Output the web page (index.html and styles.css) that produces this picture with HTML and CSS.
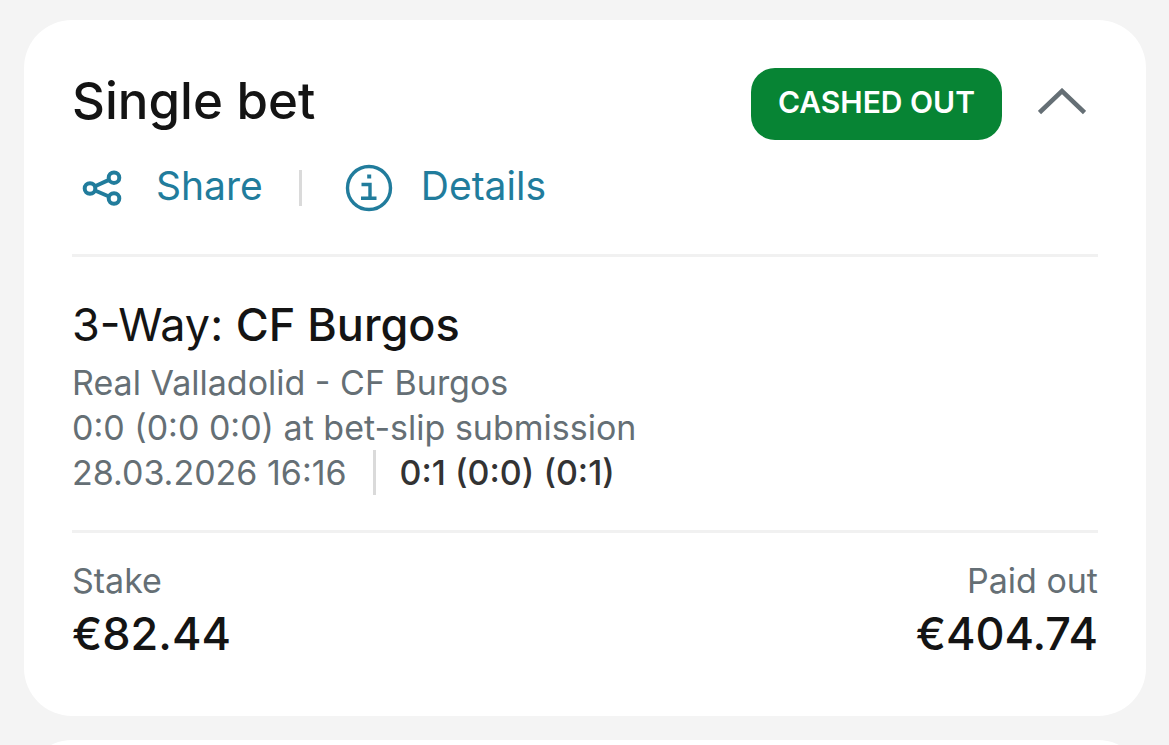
FILE: index.html
```html
<!DOCTYPE html>
<html lang="en">
<head>
	<meta charset="UTF-8">
	<meta name="viewport" content="width=device-width">
	<title>My bets</title>
	<link rel="stylesheet" href="styles.css">
</head>
<body>
<main class="bets">
	<article class="bet">
		<header class="bet-head">
			<h1 class="bet-title">Single bet</h1>
			<span class="badge">CASHED OUT</span>
			<button type="button" class="toggle" aria-label="Collapse" aria-expanded="true">
				<svg width="48" height="28" viewBox="0 0 48 28" fill="none" stroke="currentColor" stroke-width="4.500"><path d="M1.500 24.500 24 3l22.500 21.500"/></svg>
			</button>
		</header>
		<div class="actions">
			<button type="button" class="action">
				<svg width="56" height="48" viewBox="0 0 56 48" fill="none" stroke="currentColor" stroke-width="4">
					<circle cx="18" cy="24.500" r="5.300"/>
					<circle cx="42" cy="13.700" r="5.300"/>
					<circle cx="42" cy="34.500" r="5.300"/>
					<path d="M23 22.300 37 15.900M23 26.500l14 6"/>
				</svg>
				<span class="action-text">Share</span>
			</button>
			<span class="sep"></span>
			<button type="button" class="action">
				<svg width="48" height="48" viewBox="0 0 48 48" fill="none" stroke="currentColor" stroke-width="3.400">
					<circle cx="24" cy="24" r="21.500"/>
					<path d="M16.500 20.500h8.500V34M16 34.300h15.500"/>
					<path d="M22.200 12.500h4" stroke-width="4"/>
				</svg>
				<span class="action-text">Details</span>
			</button>
		</div>
		<section class="pick">
			<h2 class="pick-title">3-Way: <b>CF Burgos</b></h2>
			<p>Real Valladolid - CF Burgos</p>
			<p>0:0 (0:0 0:0) at bet-slip submission</p>
			<p class="pick-result"><time datetime="2026-03-28T16:16">28.03.2026 16:16</time><strong>0:1 (0:0) (0:1)</strong></p>
		</section>
		<dl class="totals">
			<div>
				<dt>Stake</dt>
				<dd>€82.44</dd>
			</div>
			<div class="total-paid">
				<dt>Paid out</dt>
				<dd>€404.74</dd>
			</div>
		</dl>
	</article>
	<article class="bet"></article>
</main>
</body>
</html>
```
FILE: styles.css
```css
* { box-sizing: border-box; margin: 0; padding: 0; }
html { overflow: hidden; }
body {
	background: #f4f4f4;
	color: #141414;
	font-family: Inter, "Liberation Sans", sans-serif;
}
button {
	background: none;
	border: none;
	font: inherit;
	cursor: pointer;
}
svg { display: block; flex: none; }

.bets {
	display: flex;
	flex-direction: column;
	gap: 24px;
	padding: 20px 23px 0 24px;
}
.bet {
	background: #fff;
	border-radius: 48px;
	padding: 48px 48px 52px;
}

/* header */
.bet-head {
	display: flex;
	align-items: flex-start;
	line-height: 68px;
}
.bet-title {
	flex: 1;
	font-size: 51px;
	font-weight: 500;
	line-height: 66px;
}
.badge {
	background: #078434;
	color: #fff;
	border-radius: 24px;
	padding: 0 27px 4px;
	font-size: 30px;
	font-weight: 600;
}
.toggle {
	color: #656f75;
	padding: 20px 12px 20px 36px;
}

/* share / details */
.actions {
	display: flex;
	align-items: center;
	margin-top: 24px;
	padding-bottom: 42px;
	border-bottom: 3px solid #f1f1f1;
}
.action {
	display: flex;
	align-items: center;
	gap: 28px;
	color: #217c9c;
	font-size: 39px;
	line-height: 44px;
}
.action-text { padding-bottom: 4px; }
.sep {
	width: 3px;
	height: 36px;
	margin: 0 43px 0 36px;
	background: #dadada;
}

/* selection */
.pick {
	padding: 38px 0 35px;
	border-bottom: 3px solid #f1f1f1;
	color: #656f75;
	font-size: 34px;
	line-height: 45px;
}
.pick-title {
	margin-bottom: 5px;
	color: #141414;
	font-size: 45px;
	font-weight: 400;
	line-height: 60px;
}
.pick-title b { font-weight: 500; }
.pick-result { display: flex; }
.pick-result strong {
	margin-left: 26px;
	padding-left: 24px;
	border-left: 3px solid #dadada;
	color: #333;
	font-weight: 500;
}

/* amounts */
.totals {
	display: flex;
	justify-content: space-between;
	padding-top: 25px;
}
.totals dt {
	color: #656f75;
	font-size: 34px;
	line-height: 46px;
}
.totals dd {
	font-size: 45px;
	font-weight: 500;
	line-height: 60px;
}
.total-paid { text-align: right; }
```
